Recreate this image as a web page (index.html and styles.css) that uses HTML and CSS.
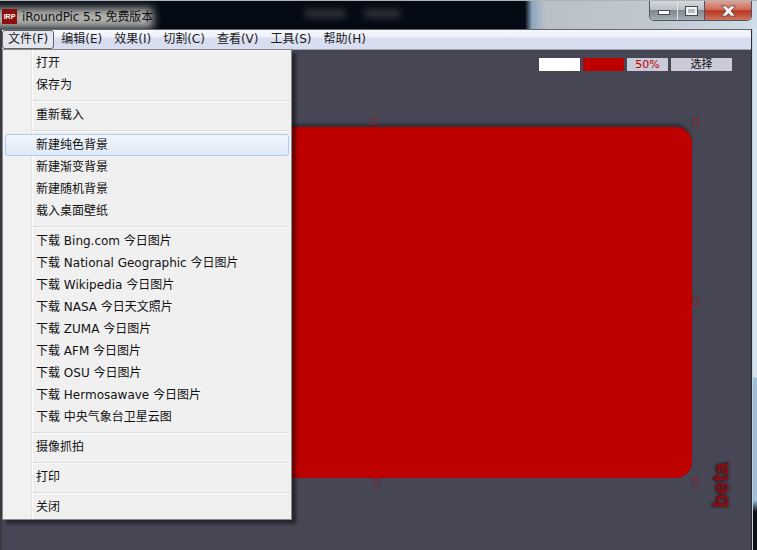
FILE: index.html
```html
<!DOCTYPE html>
<html lang="zh-CN">
<head>
    <meta charset="UTF-8">
    <title>iRoundPic</title>
    <link rel="stylesheet" href="styles.css">
</head>
<body>

    <div id="window">
        <div id="titlebar">
            <div id="title-glow"></div>
            <div id="title-blur"></div>
            <div id="title-text">
                <span id="app-icon">IRP</span>
                <span id="app-title">iRoundPic 5.5 免费版本</span>
            </div>
            <div id="win-buttons">
                <div class="win-btn btn-min"><span class="glyph-min"></span></div>
                <div class="win-btn btn-max"><span class="glyph-max"></span></div>
                <div class="win-btn btn-close">
                    <svg width="17" height="12" viewBox="0 0 17 12"><path d="M1.5 .8h4.6l2.4 2.6L10.900 .8h4.600l-4.400 5.200 4.400 5.200h-4.600L8.500 8.600 6.100 11.200H1.500l4.400-5.200z" fill="#f4f4f4" stroke="#5c3a38" stroke-width="0.8"/></svg>
                </div>
            </div>
        </div>

        <div id="client">
            <div id="menubar">
                <span class="menu-top active">文件(F)</span>
                <span class="menu-top">编辑(E)</span>
                <span class="menu-top">效果(I)</span>
                <span class="menu-top">切割(C)</span>
                <span class="menu-top">查看(V)</span>
                <span class="menu-top">工具(S)</span>
                <span class="menu-top">帮助(H)</span>
            </div>

            <div id="canvas">
                <div id="swatches">
                    <div class="swatch sw-white"></div>
                    <div class="swatch sw-red"></div>
                    <div class="swatch sw-pct">50%</div>
                    <div class="swatch sw-pick">选择</div>
                </div>
                <div id="picture"></div>
                <div class="handle h-tm"></div>
                <div class="handle h-tr"></div>
                <div class="handle h-mr"></div>
                <div class="handle h-bm"></div>
                <div class="handle h-br"></div>
                <div id="beta">beta</div>
            </div>
        </div>

        <div id="file-menu">
            <div class="item">打开</div>
            <div class="item">保存为</div>
            <div class="sep"></div>
            <div class="item">重新载入</div>
            <div class="sep"></div>
            <div class="item hover">新建纯色背景</div>
            <div class="item">新建渐变背景</div>
            <div class="item">新建随机背景</div>
            <div class="item">载入桌面壁纸</div>
            <div class="sep"></div>
            <div class="item">下载 Bing.com 今日图片</div>
            <div class="item">下载 National Geographic 今日图片</div>
            <div class="item">下载 Wikipedia 今日图片</div>
            <div class="item">下载 NASA 今日天文照片</div>
            <div class="item">下载 ZUMA 今日图片</div>
            <div class="item">下载 AFM 今日图片</div>
            <div class="item">下载 OSU 今日图片</div>
            <div class="item">下载 Hermosawave 今日图片</div>
            <div class="item">下载 中央气象台卫星云图</div>
            <div class="sep"></div>
            <div class="item">摄像抓拍</div>
            <div class="sep"></div>
            <div class="item">打印</div>
            <div class="sep"></div>
            <div class="item">关闭</div>
        </div>
    </div>

</body>
</html>
```

FILE: styles.css
```css
html, body {
    margin: 0;
    padding: 0;
    overflow: hidden;
}
body {
    width: 757px;
    height: 550px;
    font-family: "DejaVu Sans", "Noto Sans CJK SC", sans-serif;
    font-size: 12px;
    color: #1a1a1a;
}
#window {
    position: relative;
    width: 757px;
    height: 550px;
    background: linear-gradient(to bottom, #d5e4f3 0, #d5e4f3 377px, #9fbfdc 378px, #9fbfdc 500px, #0c1018 512px);
    overflow: hidden;
}

/* title bar */
#titlebar {
    position: relative;
    height: 28px;
    border-top: 1px solid #aeb3b8;
    overflow: hidden;
    background:
        linear-gradient(to right, #050b14 0, #050b14 525px, #8da6c0 532px, #b9c0c6 545px, #c0c7cd 650px, #cfdde9 757px);
}
#title-glow {
    position: absolute;
    left: -10px;
    top: 7px;
    width: 163px;
    height: 20px;
    background: #b0b0ad;
    filter: blur(4px);
}
#title-blur {
    position: absolute;
    left: 305px;
    top: 8px;
    width: 95px;
    height: 9px;
    background: linear-gradient(to right, #2a2f38 0, #2a2f38 40%, transparent 45%, transparent 60%, #2a2f38 65%);
    filter: blur(3px);
}
#title-text {
    position: relative;
    display: flex;
    align-items: center;
    gap: 5px;
    height: 28px;
    padding-left: 2px;
}
#app-icon {
    width: 15px;
    height: 15px;
    margin-top: 2px;
    background: #8c1010;
    color: #fff;
    font-size: 7px;
    font-weight: bold;
    font-family: "Liberation Sans", sans-serif;
    line-height: 15px;
    text-align: center;
}
#app-title {
    font-size: 12px;
    letter-spacing: -0.1px;
    color: #111;
}
#win-buttons {
    position: absolute;
    top: 0;
    right: 5px;
    display: flex;
    height: 19px;
    border: 1px solid #4c5560;
    border-top: none;
    border-radius: 0 0 5px 5px;
    overflow: hidden;
}
.win-btn {
    display: flex;
    align-items: center;
    justify-content: center;
    box-sizing: border-box;
    height: 19px;
    background: linear-gradient(to bottom, #d6dadd 0, #b9bfc4 45%, #7f8890 50%, #a5adb3 100%);
}
.btn-min { width: 28px; border-right: 1px solid #e3e6e8; }
.btn-max { width: 27px; border-right: 1px solid #4c5560; }
.btn-close {
    width: 46px;
    background: linear-gradient(to bottom, #dfa194 0, #cf6b58 45%, #b8351f 52%, #cf7560 100%);
}
.glyph-min {
    width: 10px;
    height: 3px;
    margin-top: 3px;
    background: #fff;
    border: 1px solid #444c54;
}
.glyph-max {
    width: 7px;
    height: 4px;
    background: #b7bcc1;
    border: 2px solid #f1f3f4;
    outline: 1px solid #444c54;
}

/* client area */
#client {
    position: absolute;
    top: 29px;
    left: 0;
    width: 749px;
    height: 521px;
    border-left: 2px solid #3a3a42;
    border-right: 1px solid #2c2c30;
    border-top: 1px solid #62666d;
    box-shadow: 1px 0 0 #c8d0d8;
}
#menubar {
    display: flex;
    align-items: center;
    height: 19px;
    background: linear-gradient(to bottom, #f6f8fc 0, #eef1f9 35%, #d8ddf0 45%, #d8ddf0 100%);
    border-bottom: 1px solid #a0a3ae;
}
.menu-top {
    padding: 0 5px;
    height: 19px;
    line-height: 19px;
    margin-right: 2px;
    box-sizing: border-box;
}
.menu-top.active {
    border: 1px solid #5f6368;
    border-radius: 3px;
    line-height: 17px;
    background: #e4e6ee;
    padding: 0 5px;
}
#canvas {
    position: relative;
    height: 501px;
    background: #464655;
}
#swatches {
    display: flex;
    justify-content: flex-end;
    gap: 3px;
    padding: 8px 19px 0 0;
}
.swatch {
    width: 41px;
    height: 13px;
    font-size: 11px;
    line-height: 13px;
    text-align: center;
    background: #cacad8;
}
.sw-white { background: #fff; }
.sw-red { background: #bd0000; }
.sw-pct { color: #bd0000; }
.sw-pick { width: 61px; color: #111; }

/* the picture and its resize handles */
#picture {
    position: absolute;
    left: 200px;
    top: 77px;
    width: 490px;
    height: 351px;
    background: #bd0000;
    border-radius: 0 16px 16px 0;
    box-shadow: 0 -4px 3px -1px #30303a;
}
.handle {
    position: absolute;
    box-sizing: border-box;
    width: 7px;
    height: 7px;
    border: 1px solid #7f1f2a;
}
.h-tm { left: 369px; top: 68px; }
.h-tr { left: 690px; top: 68px; }
.h-mr { left: 690px; top: 248px; }
.h-bm { left: 371px; top: 428px; }
.h-br { left: 690px; top: 428px; }
#beta {
    position: absolute;
    left: 696px;
    top: 422px;
    font-family: "Liberation Sans", sans-serif;
    font-size: 22px;
    font-weight: bold;
    color: #8a0c10;
    text-shadow: 0 0 2px #1c1c22, 0 0 3px #25252c;
    transform: rotate(-90deg);
    transform-origin: center;
}

/* file menu dropdown */
#file-menu {
    position: absolute;
    left: 2px;
    top: 49px;
    width: 288px;
    padding: 2px 0 1px;
    background: linear-gradient(to right, #f1f1f1 0, #f1f1f1 28px, #e2e3e3 28px, #e2e3e3 29px, #fff 29px, #fff 30px, #f0f0f0 30px);
    border: 1px solid #8a8a8a;
    box-shadow: 4px 4px 3px rgba(0, 0, 0, 0.45);
}
.item {
    box-sizing: border-box;
    height: 22px;
    line-height: 22px;
    padding-left: 33px;
    margin: 0 2px 0 0;
    color: #111;
    white-space: nowrap;
}
.item.hover {
    margin: 0 2px;
    padding-left: 30px;
    line-height: 20px;
    border: 1px solid #aaccf6;
    border-radius: 3px;
    background: linear-gradient(to bottom, #f2f6fb, #dfe8f6);
}
.sep {
    height: 8px;
    margin-left: 29px;
    margin-right: 2px;
    background:
        linear-gradient(#dcdcdc, #dcdcdc) 0 4px / 100% 1px no-repeat,
        linear-gradient(#fafafa, #fafafa) 0 5px / 100% 1px no-repeat;
}
```
